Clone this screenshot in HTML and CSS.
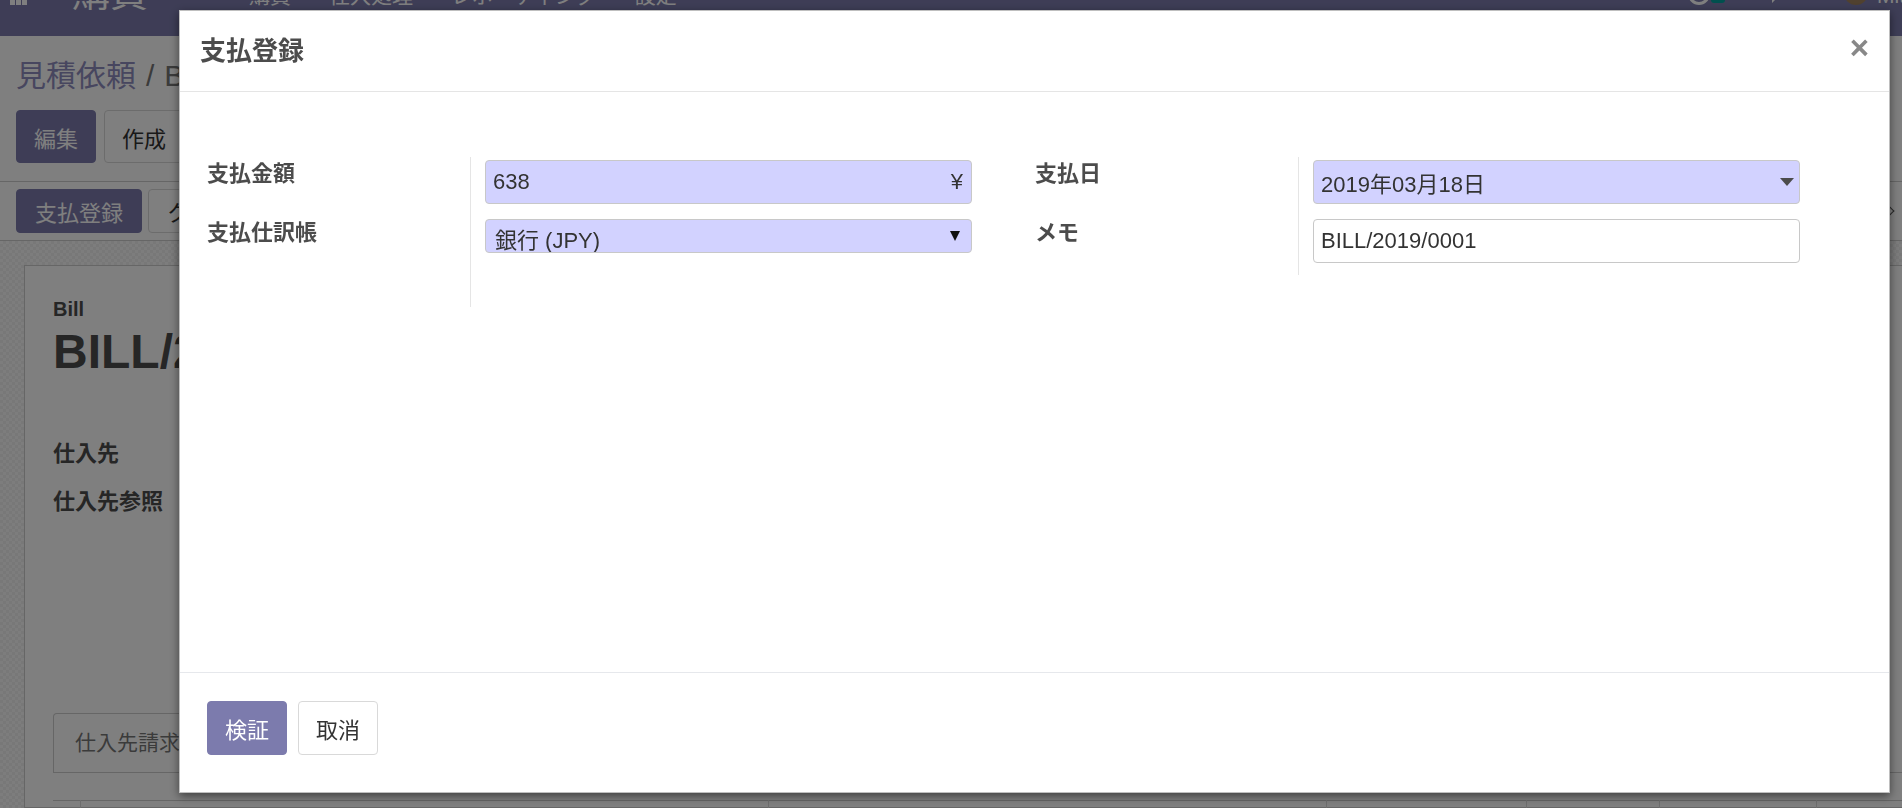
FILE: index.html
```html
<!DOCTYPE html>
<html lang="ja">
<head>
    <meta charset="UTF-8">
    <meta name="viewport" content="width=device-width, initial-scale=1.0">
    <title>BILL/2019/0001 - 購買</title>
    <link rel="stylesheet" href="styles.css">
</head>
<body>
    <header class="navbar">
        <svg class="apps-icon" width="17" height="17" viewBox="0 0 17 17">
            <rect x="0" y="0" width="5" height="5"/><rect x="6" y="0" width="5" height="5"/><rect x="12" y="0" width="5" height="5"/>
            <rect x="0" y="6" width="5" height="5"/><rect x="6" y="6" width="5" height="5"/><rect x="12" y="6" width="5" height="5"/>
            <rect x="0" y="12" width="5" height="5"/><rect x="6" y="12" width="5" height="5"/><rect x="12" y="12" width="5" height="5"/>
        </svg>
        <span class="brand">購買</span>
        <nav class="menu">
            <a>購買</a>
            <a>仕入処理</a>
            <a>レポーティング</a>
            <a>設定</a>
        </nav>
        <div class="systray">
            <span class="activity"><i class="clock"></i><i class="badge"></i></span>
            <svg class="chat" width="27" height="22" viewBox="0 0 27 22">
                <path d="M3 2h15a3 3 0 0 1 3 3v7a3 3 0 0 1-3 3H9l-5 5v-5H3a3 3 0 0 1-3-3V5a3 3 0 0 1 3-3z"/>
            </svg>
            <span class="avatar"></span>
            <span class="user">Mitchell Admin</span>
        </div>
    </header>

    <div class="control-panel">
        <ol class="breadcrumb">
            <li><a>見積依頼</a></li>
            <li class="active">BILL/2019/0001</li>
        </ol>
        <div class="cp-buttons">
            <button class="btn btn-primary">編集</button>
            <button class="btn btn-secondary">作成</button>
        </div>
    </div>

    <div class="statusbar">
        <button class="btn btn-primary btn-sm">支払登録</button>
        <button class="btn btn-secondary btn-sm">クレジットノート</button>
        <div class="pipeline">
            <span>ドラフト</span><i class="sep"></i>
            <span>未払</span><i class="sep"></i>
            <span class="last">支払済</span>
        </div>
    </div>

    <div class="form-bg">
        <div class="sheet">
            <div class="doc-type">Bill</div>
            <h1 class="doc-name">BILL/2019/0001</h1>
            <div class="info">
                <div class="info-label">仕入先</div>
                <div class="info-label">仕入先参照</div>
            </div>
            <ul class="tabs">
                <li class="tab">仕入先請求書明細</li>
                <li class="tab">その他の情報</li>
            </ul>
            <table class="lines">
                <tr>
                    <th class="c0"></th><th class="c1">プロダクト</th><th class="c2">説明</th>
                    <th class="c3">勘定科目</th><th class="c4">数量</th><th class="c5">単価</th><th>税</th>
                </tr>
            </table>
        </div>
    </div>

    <div class="backdrop"></div>

    <div class="modal">
        <div class="modal-header">
            <h4 class="modal-title">支払登録</h4>
            <button class="close">×</button>
        </div>
        <div class="modal-body">
            <div class="groups">
                <div class="group">
                    <label class="label">支払金額</label>
                    <div class="field">
                        <div class="input required monetary">
                            <input type="text" value="638">
                            <span class="currency">¥</span>
                        </div>
                    </div>
                    <label class="label">支払仕訳帳</label>
                    <div class="field">
                        <div class="input required select">
                            <span class="select-text">銀行 (JPY)</span>
                            <span class="select-arrow"></span>
                        </div>
                    </div>
                    <div></div>
                    <div class="field spacer"></div>
                </div>
                <div class="group">
                    <label class="label">支払日</label>
                    <div class="field">
                        <div class="input required date">
                            <input type="text" value="2019年03月18日">
                            <span class="caret"></span>
                        </div>
                    </div>
                    <label class="label">メモ</label>
                    <div class="field">
                        <div class="input">
                            <input type="text" value="BILL/2019/0001">
                        </div>
                    </div>
                </div>
            </div>
        </div>
        <div class="modal-footer">
            <button class="btn btn-primary">検証</button>
            <button class="btn btn-secondary">取消</button>
        </div>
    </div>
</body>
</html>
```

FILE: styles.css
```css
:root {
    --brand: #7c7bad;
    --text: #4c4c4c;
    --border: #cccccc;
    --required: #d2d2ff;
}

* {
    box-sizing: border-box;
}

html,
body {
    margin: 0;
    height: 808px;
    overflow: hidden;
}

body {
    font-family: "Liberation Sans", "Noto Sans CJK JP", sans-serif;
    font-size: 21px;
    color: var(--text);
    background: #fff;
}

/* top bar (its top is cut off in the shot) */
.navbar {
    height: 36px;
    background: var(--brand);
    color: #fff;
    display: flex;
    align-items: flex-start;
    overflow: hidden;
}

.apps-icon {
    fill: #fff;
    margin: -12px 0 0 10px;
    flex: none;
}

.brand {
    font-size: 38px;
    line-height: 38px;
    margin: -26px 0 0 45px;
}

.menu {
    display: flex;
    flex: 1;
    margin-left: 82px;
}

.menu a {
    font-size: 21px;
    line-height: 21px;
    padding: 0 19px;
    margin-top: -15px;
}

.systray {
    flex: none;
    width: 214px;
    display: flex;
    align-items: flex-start;
    overflow: hidden;
}

.activity {
    display: flex;
    width: 39px;
    margin-top: -17px;
}

.clock {
    width: 22px;
    height: 22px;
    border: 3px solid #fff;
    border-radius: 50%;
}

.badge {
    width: 14px;
    height: 14px;
    margin: 6px 0 0 1px;
    background: #00a09d;
    border-radius: 3px;
}

.chat {
    fill: #fff;
    flex: none;
    margin: -17px 0 0 43px;
}

.avatar {
    flex: none;
    width: 24px;
    height: 24px;
    border-radius: 50%;
    background: #a0825e;
    margin: -19px 0 0 49px;
}

.user {
    white-space: nowrap;
    line-height: 21px;
    margin: -15px 0 0 9px;
}

/* control panel */
.control-panel {
    padding: 20px 16px 18px;
    border-bottom: 1px solid var(--border);
}

.breadcrumb {
    list-style: none;
    margin: 0;
    padding: 0;
    display: flex;
    font-size: 30px;
    line-height: 39px;
}

.breadcrumb a {
    color: #8f8dbf;
}

.breadcrumb li + li::before {
    content: "/";
    padding: 0 10px;
    color: #777;
}

.breadcrumb .active {
    color: #777;
}

.cp-buttons {
    display: flex;
    gap: 8px;
    margin-top: 15px;
}

.btn {
    font-family: inherit;
    font-size: 22px;
    height: 53px;
    padding: 0 17px;
    border-radius: 4px;
    border: 1px solid transparent;
    cursor: pointer;
}

.btn-primary {
    background: var(--brand);
    border-color: var(--brand);
    color: #fff;
}

.btn-secondary {
    background: #fff;
    border-color: #d9d9d9;
    color: #333;
}

.btn-sm {
    height: 44px;
    padding: 0 18px;
}

.statusbar {
    display: flex;
    gap: 6px;
    padding: 7px 16px;
    border-bottom: 1px solid var(--border);
    overflow: hidden;
}

.pipeline {
    flex: none;
    margin: 0 -96px 0 auto;
    display: flex;
    align-items: center;
    color: #777;
    font-size: 20px;
}

.pipeline span {
    padding: 0 14px;
}

.pipeline .last {
    width: 90px;
}

.sep {
    width: 12px;
    height: 12px;
    border-top: 1px solid #555;
    border-right: 1px solid #555;
    transform: rotate(45deg);
}

/* form sheet behind the dialog */
.form-bg {
    height: 567px;
    padding: 24px 0 0 24px;
    background: repeating-conic-gradient(#f1f1f1 0 25%, #fbfbfb 0 50%) 0 0 / 6px 6px;
}

.sheet {
    height: 100%;
    background: #fff;
    border: 1px solid var(--border);
    border-right: none;
    padding: 31px 0 0 28px;
}

.doc-type {
    font-size: 20px;
    line-height: 24px;
    font-weight: bold;
}

.doc-name {
    margin: 4px 0 0;
    font-size: 48px;
    line-height: 53px;
}

.info {
    margin-top: 52px;
}

.info-label {
    font-size: 22px;
    line-height: 48px;
    font-weight: bold;
}

.tabs {
    list-style: none;
    margin: 187px 0 0;
    padding: 0;
    display: flex;
    border-bottom: 1px solid var(--border);
}

.tab {
    height: 59px;
    line-height: 57px;
    padding: 0 21px;
    border: 1px solid var(--border);
    border-bottom: none;
    border-radius: 4px 4px 0 0;
    color: #777;
}

.lines {
    margin-top: 27px;
    width: 100%;
    border-collapse: collapse;
    border-top: 1px solid var(--border);
}

.lines th {
    height: 40px;
    border-left: 1px solid #ddd;
    text-align: left;
    font-size: 20px;
}

.lines .c0 { width: 27px; border-left: none; }
.lines .c1 { width: 688px; }
.lines .c2 { width: 558px; }
.lines .c3 { width: 200px; }
.lines .c4 { width: 133px; }
.lines .c5 { width: 157px; }

/* dialog */
.backdrop {
    position: fixed;
    inset: 0;
    background: rgba(0, 0, 0, 0.5);
}

.modal {
    position: fixed;
    left: 179px;
    top: 10px;
    width: 1711px;
    height: 783px;
    background: #fff;
    border: 1px solid rgba(0, 0, 0, 0.25);
    box-shadow: 0 3px 9px rgba(0, 0, 0, 0.5);
    display: flex;
    flex-direction: column;
}

.modal-header {
    height: 81px;
    padding: 0 20px 6px;
    border-bottom: 1px solid #e5e5e5;
    display: flex;
    align-items: center;
    justify-content: space-between;
}

.modal-title {
    margin: 0;
    font-size: 26px;
    font-weight: bold;
}

.close {
    background: none;
    border: 0;
    padding: 0;
    font-family: "Liberation Sans", sans-serif;
    font-size: 33px;
    font-weight: bold;
    line-height: 1;
    color: #888;
    margin-bottom: 2px;
    cursor: pointer;
}

.modal-body {
    flex: 1;
    padding-top: 65px;
}

.groups {
    display: grid;
    grid-template-columns: 1fr 1fr;
    align-items: start;
    padding: 0 26px 0 27px;
}

.group {
    display: grid;
    grid-template-columns: 263px 1fr;
}

.label {
    font-size: 22px;
    line-height: 33px;
    font-weight: bold;
}

.field {
    border-left: 1px solid #e5e5e5;
    padding: 3px 63px 12px 14px;
}

.field.spacer {
    height: 42px;
    padding: 0;
}

.input {
    display: flex;
    align-items: center;
    height: 44px;
    border: 1px solid #c8c8c8;
    border-radius: 4px;
    background: #fff;
    color: #333;
    font-size: 22px;
    overflow: hidden;
}

.input input {
    flex: 1;
    min-width: 0;
    height: 100%;
    border: none;
    outline: none;
    background: transparent;
    padding: 0 7px;
    font: inherit;
    color: inherit;
}

.required {
    background: var(--required);
}

.currency {
    padding-right: 8px;
}

.select {
    height: 34px;
    justify-content: space-between;
    padding: 0 11px 0 9px;
}

.select-text {
    padding-top: 10px;
    line-height: 26px;
    white-space: nowrap;
}

.select-arrow {
    flex: none;
    width: 0;
    height: 0;
    border-left: 5px solid transparent;
    border-right: 5px solid transparent;
    border-top: 10px solid #111;
}

.caret {
    flex: none;
    width: 0;
    height: 0;
    border-left: 7px solid transparent;
    border-right: 7px solid transparent;
    border-top: 8px solid #4c4c4c;
    margin-right: 5px;
}

.modal-footer {
    border-top: 1px solid #e6e8ec;
    padding: 28px 27px 37px;
    display: flex;
    gap: 11px;
}

.modal-footer .btn {
    height: 54px;
}
```
